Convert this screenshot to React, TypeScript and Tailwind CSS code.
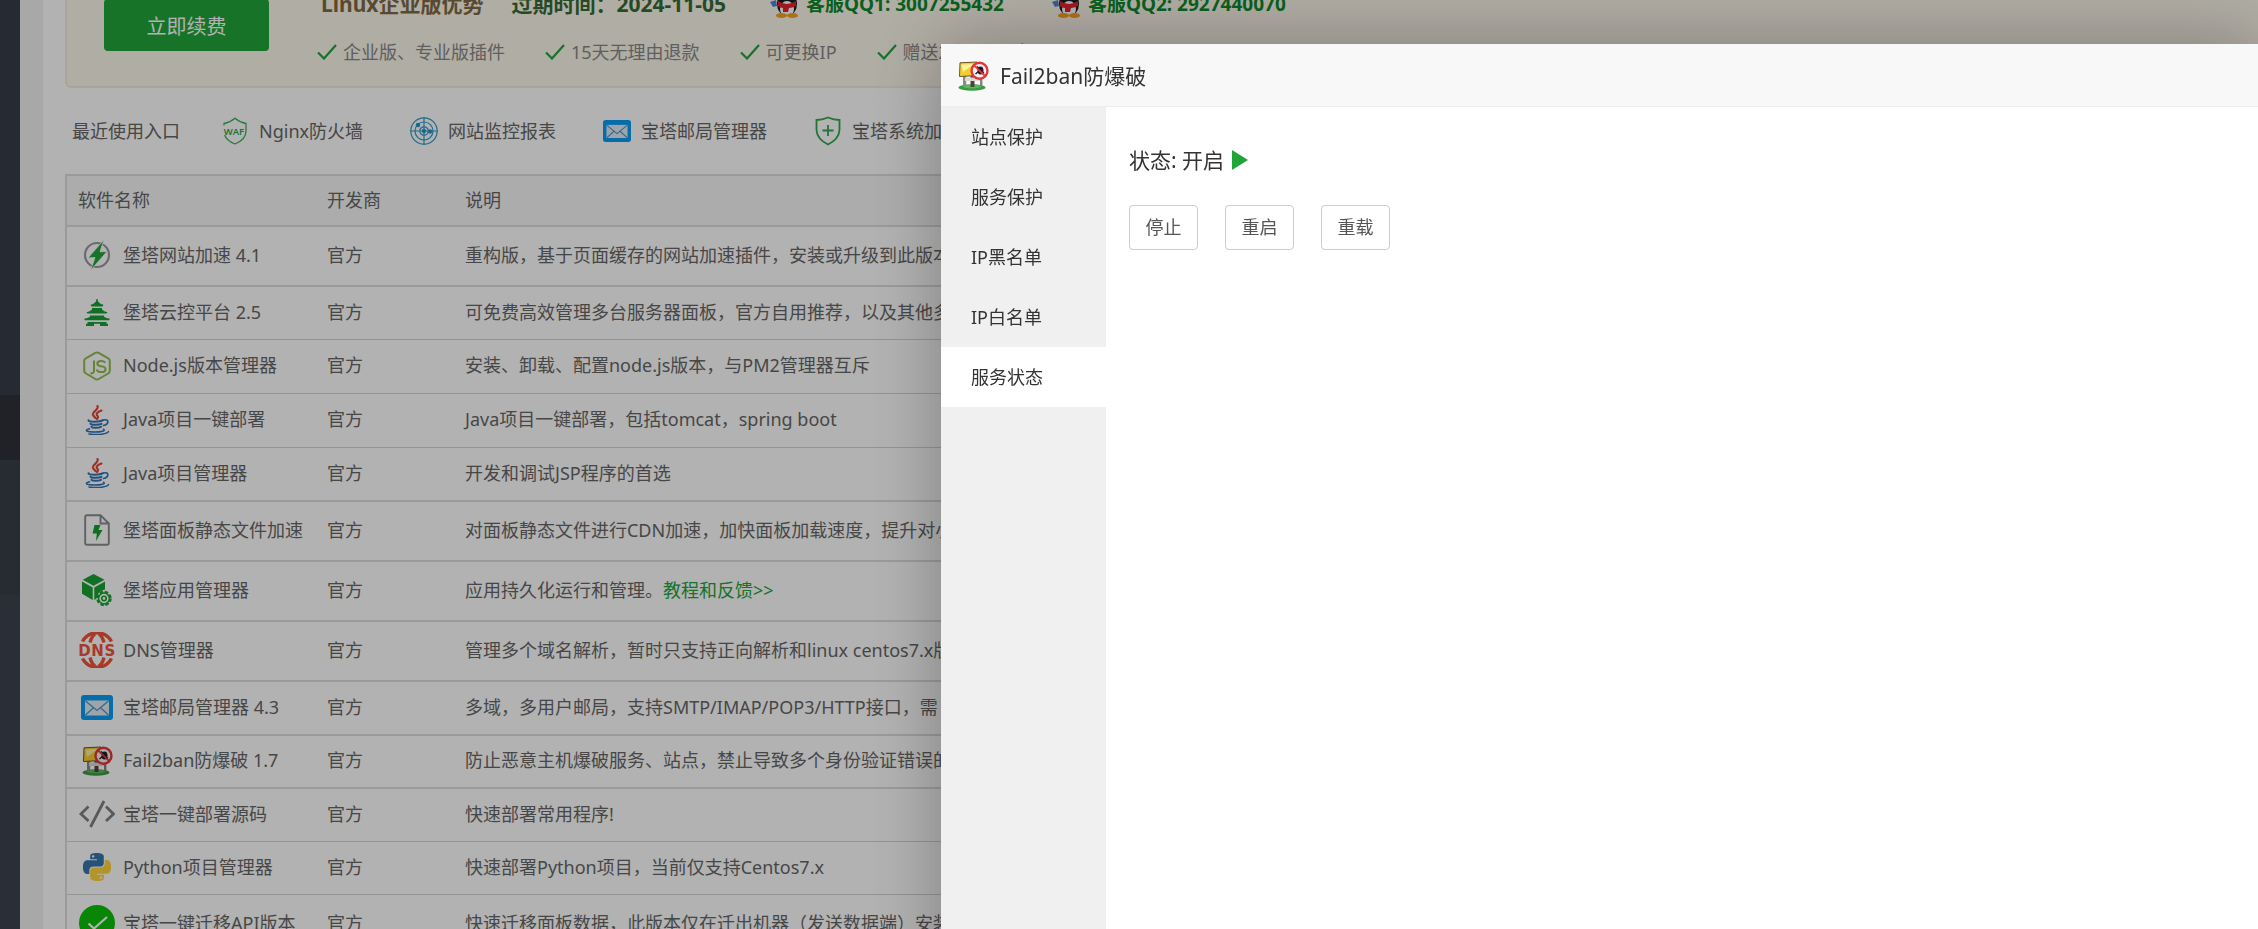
import type { ReactNode } from "react";

function CheckMark() {
  return (
    <svg viewBox="0 0 20 16" className="h-4 w-5 shrink-0" fill="none" stroke="#20a53a" strokeWidth="2.2">
      <path d="M1 8.5 L7 14.5 L19 1" />
    </svg>
  );
}

function Penguin() {
  return (
    <svg viewBox="0 0 28 28" className="h-7 w-7 shrink-0">
      <path d="M0 12 L6 10 L7 16 L3 17 Z" fill="#4d86d8" />
      <ellipse cx="17" cy="14" rx="10" ry="12" fill="#1c1c1c" />
      <ellipse cx="17" cy="19" rx="7" ry="8" fill="#fff" />
      <path d="M8 11 q9 6 18 0 l0 5 q-4 2 -7 2 l-1 4 h-5 v-4 q-3 0 -5 -2 Z" fill="#e8222c" />
      <ellipse cx="11.5" cy="25.5" rx="5.5" ry="2.5" fill="#f7a21b" />
      <ellipse cx="22.5" cy="25.5" rx="5.5" ry="2.5" fill="#f7a21b" />
    </svg>
  );
}

function WafIcon() {
  return (
    <svg viewBox="0 0 30 30" className="h-[30px] w-[30px]" fill="none" stroke="#3fae5a" strokeWidth="1.3">
      <path d="M4 9.5 V7.5 Q10 6.5 15 2.2 Q20 6.5 26 7.5 V15 Q26 23.5 15 28 Q6.5 24.5 4.600 19" />
      <text x="14" y="18.5" textAnchor="middle" fontSize="9.5" fontWeight="600" fill="#20a53a" stroke="none" fontFamily="Open Sans, sans-serif">
        WAF
      </text>
    </svg>
  );
}

function RadarIcon() {
  return (
    <svg viewBox="0 0 30 30" className="h-[30px] w-[30px]" fill="none" stroke="#2f9bcb" strokeWidth="1.2">
      <circle cx="15" cy="15" r="13.2" />
      <circle cx="15" cy="15" r="9" />
      <circle cx="15" cy="15" r="4.2" />
      <path d="M15 1 V29 M1 15 H29" />
      <circle cx="15" cy="15" r="1.6" fill="#1a8fc4" />
      <circle cx="9" cy="9" r="1.7" fill="#1a8fc4" />
      <circle cx="21" cy="15.5" r="1.7" fill="#1a8fc4" />
    </svg>
  );
}

function MailIcon({ className }: { className: string }) {
  return (
    <svg viewBox="0 0 32 25" className={className}>
      <rect width="32" height="25" rx="3" fill="#0a9df5" />
      <rect x="4" y="5.5" width="24" height="15" fill="#e6ebf0" />
      <path d="M4.500 6 L16 15.500 L27.500 6 M4.500 20 L12.500 12.800 M27.500 20 L19.500 12.800" fill="none" stroke="#3a97d6" strokeWidth="1.200" />
    </svg>
  );
}

function ShieldPlusIcon() {
  return (
    <svg viewBox="0 0 30 30" className="h-[30px] w-[30px]" fill="none" stroke="#2fa84c" strokeWidth="1.8">
      <path d="M15 1.5 Q9 4 3.5 4 V14 Q4 23 15 28.5 Q26 23 26.5 14 V4 Q21 4 15 1.5 Z" />
      <path d="M15 9 V20 M9.5 14.5 H20.5" />
    </svg>
  );
}

function BoltCircleIcon() {
  return (
    <svg viewBox="0 0 30 32" className="h-8 w-[30px]">
      <circle cx="15" cy="16" r="12" fill="none" stroke="#9b98a3" strokeWidth="2.200" />
      <path d="M22 0.5 L6 19 L13 18.500 L8.500 31.500 L25 12.500 L18 12.800 Z" fill="#20a53a" stroke="#fff" strokeWidth="0.8" />
    </svg>
  );
}

function PagodaIcon() {
  return (
    <svg viewBox="0 0 26 27" className="h-[27px] w-[26px]" fill="#18a034">
      <path d="M12.4 0 H13.6 L14 2.400 Q16 4.800 19.500 5.800 L18.500 7.400 H7.500 L6.500 5.800 Q10 4.800 12 2.400 Z" />
      <path d="M8 9 H18 V10.600 Q20 12.800 23.500 13.200 L22.500 14.600 H3.500 L2.500 13.200 Q6 12.800 8 10.600 Z" />
      <path d="M6 16.400 H20 V17.800 Q22 19.400 26 19.700 L25 21.300 H1 L0 19.700 Q4 19.400 6 17.800 Z" />
      <path d="M3.500 23 H22.500 V24.800 H24 V27 H16 V24.800 H10 V27 H2 V24.800 H3.500 Z" />
    </svg>
  );
}

function NodeIcon() {
  return (
    <svg viewBox="0 0 28 30" className="h-[30px] w-7">
      <path
        d="M8.500 25.600 L3 22.500 Q1.200 21.500 1.200 19.800 V10 Q1.200 8.300 2.800 7.400 L12.300 1.900 Q14 1 15.700 1.900 L25.200 7.400 Q26.800 8.300 26.800 10 V19.800 Q26.800 21.500 25.200 22.500 L15.700 28 Q14 29 12.300 28 L9.800 26.500"
        fill="none"
        stroke="#93bd4c"
        strokeWidth="2"
        strokeLinecap="round"
      />
      <path
        d="M11 9.500 V20 Q11 22.500 7.500 22.200 M22.300 11.800 Q21 9.900 18 9.900 Q14.300 9.900 14.300 12.500 Q14.300 14.900 18 15.200 Q22.500 15.500 22.500 18.200 Q22.500 21.100 18.200 21.100 Q14.500 21.100 13.800 18.400"
        fill="none"
        stroke="#93bd4c"
        strokeWidth="2"
      />
    </svg>
  );
}

function JavaIcon() {
  return (
    <svg viewBox="0 0 26 30" className="h-[30px] w-[26px]" fill="none" strokeLinecap="round">
      <path d="M13.500 1 C15.500 5 7.500 6.500 9 10 C9.500 11 10.500 12 11.500 13 M17.500 5.500 C13 7 11.500 9 13.500 10.800 C14.500 12 14 13 13 14" stroke="#e5433a" strokeWidth="2.100" />
      <path d="M4.500 15.300 C4 17.200 16 17.200 19 15.200 M6.500 18.600 C7 20.200 15.500 20.100 17.500 18.800 M7.500 21.800 C8.500 23.200 14.500 23.100 17 21.800" stroke="#2f74b8" strokeWidth="2" />
      <path d="M19.500 15 C25.500 13.500 25 19.500 19.500 20.500" stroke="#2f74b8" strokeWidth="1.700" />
      <path d="M5.500 23.800 C-1 25.500 3.500 27 10.500 27 C17.500 27 22 25.700 19.500 24.200 M5 28.900 C14 30.200 23.500 29.200 24.500 26.600" stroke="#2f74b8" strokeWidth="1.500" />
    </svg>
  );
}

function FileBoltIcon() {
  return (
    <svg viewBox="0 0 26 32" className="h-8 w-[26px]">
      <path d="M3 1.200 H16.500 L24.800 9.500 V29 Q24.800 30.800 23 30.800 H3 Q1.200 30.800 1.200 29 V3 Q1.200 1.200 3 1.200 Z M16.500 1.200 V9.500 H24.800" fill="none" stroke="#8b8b90" strokeWidth="1.900" />
      <path d="M10.500 11 H16.500 L14.500 16 H18.500 L12 27 L12.800 19.500 H8.500 Z" fill="#13a02f" />
    </svg>
  );
}

function CubeGearIcon() {
  return (
    <svg viewBox="0 0 30 33" className="h-[33px] w-[30px]">
      <path d="M11.500 0 L22.500 5.800 L11.500 11.800 L0.800 5.800 Z M0 7.500 L10.700 13.400 V26 L0 19.800 Z M12.300 13.400 L23 7.500 V15.500 Q15.500 17 14.500 24.500 L12.300 26 Z" fill="#17a232" />
      <circle cx="22" cy="24.500" r="6.500" fill="none" stroke="#17a232" strokeWidth="2.400" strokeDasharray="3.400 1.700" />
      <circle cx="22" cy="24.500" r="5.400" fill="none" stroke="#17a232" strokeWidth="1.500" />
      <circle cx="22" cy="24.500" r="2.200" fill="none" stroke="#17a232" strokeWidth="1.600" />
    </svg>
  );
}

function DnsIcon() {
  return (
    <svg viewBox="0 0 36 36" className="h-9 w-9">
      <path d="M3.500 9.500 A16.500 16.500 0 0 1 32.500 9.500 M3.500 26.500 A16.500 16.500 0 0 0 32.500 26.500" fill="none" stroke="#f0533a" strokeWidth="3.400" />
      <path d="M11 10.500 Q12.500 4.500 16 1.800 M25 10.500 Q23.500 4.500 20 1.800 M11 25.500 Q12.500 31.500 16 34.200 M25 25.500 Q23.500 31.500 20 34.200" fill="none" stroke="#f0533a" strokeWidth="3.400" />
      <g fontSize="15" fontWeight="700" fill="#f0533a" fontFamily="DejaVu Sans, sans-serif" textAnchor="middle">
        <text x="5.500" y="23.500">D</text>
        <text x="18.500" y="23.500">N</text>
        <text x="31" y="23.500">S</text>
      </g>
    </svg>
  );
}

function Fail2banIcon() {
  return (
    <svg viewBox="0 0 31 30" className="h-[30px] w-[31px]">
      <ellipse cx="14" cy="26.500" rx="13.500" ry="3.200" fill="#3b9b45" />
      <ellipse cx="14" cy="25.500" rx="9" ry="1.800" fill="#59b95b" />
      <rect x="5" y="13" width="3.200" height="12" fill="#8d8a86" />
      <rect x="12.500" y="15" width="4" height="11" fill="#4f413b" />
      <rect x="22" y="17" width="2.400" height="8.500" fill="#88827c" />
      <path d="M7 16.500 H22 V20 H7 Z" fill="#dcd8d2" />
      <path d="M2 1.800 L19 1 V14.500 L1.500 15.500 Z" fill="#f3cf2e" stroke="#6a5431" strokeWidth="1" />
      <path d="M3.500 3.500 L16 3 L5 11 Z" fill="#fdf0a0" />
      <circle cx="21.500" cy="9.700" r="8" fill="#f3f1f1" stroke="#e5353a" strokeWidth="2.400" />
      <ellipse cx="22.500" cy="9.500" rx="3" ry="4" fill="#1d1c26" />
      <path d="M17.500 13 L21 10 M19 5.500 L26 12.500" stroke="#1d1c26" strokeWidth="1.400" />
      <path d="M15.800 4.200 L27.200 15.200" stroke="#e5353a" strokeWidth="1.800" />
    </svg>
  );
}

function CodeIcon() {
  return (
    <svg viewBox="0 0 36 28" className="h-7 w-9" fill="none" stroke="#808080" strokeWidth="2.800">
      <path d="M9.500 6.500 L2 14 L9.500 21 M27 6.500 L34.500 14 L27 21 M25 1 L11.500 27" />
    </svg>
  );
}

function PythonIcon() {
  return (
    <svg viewBox="0 0 24 24" className="h-7 w-7">
      <path
        fill="#3776ab"
        d="M14.25.18l.9.2.73.26.59.3.45.32.34.34.25.34.16.33.1.3.04.26.02.2-.01.13V8.5l-.05.63-.13.55-.21.46-.26.38-.3.31-.33.25-.35.19-.35.14-.33.1-.3.07-.26.04-.21.02H8.77l-.69.05-.59.14-.5.22-.41.27-.33.32-.27.35-.2.36-.15.37-.1.35-.07.32-.04.27-.02.21v3.06H3.17l-.21-.03-.28-.07-.32-.12-.35-.18-.36-.26-.36-.36-.35-.46-.32-.59-.28-.73-.21-.88-.14-1.05-.05-1.23.06-1.22.16-1.04.24-.87.32-.71.36-.57.4-.44.42-.33.42-.24.4-.16.36-.1.32-.05.24-.01h.16l.06.01h8.16v-.83H6.18l-.01-2.75-.02-.37.05-.34.11-.31.17-.28.25-.26.31-.23.38-.2.44-.18.51-.15.58-.12.64-.1.71-.06.77-.04.84-.02 1.27.05zm-6.3 1.98l-.23.33-.08.41.08.41.23.34.33.22.41.09.41-.09.33-.22.23-.34.08-.41-.08-.41-.23-.33-.33-.22-.41-.09-.41.09z"
      />
      <path
        fill="#ffd43b"
        d="M21.040 6.110l.28.06.32.12.35.18.36.27.36.35.35.47.32.59.28.73.21.88.14 1.04.05 1.23-.06 1.23-.16 1.04-.24.86-.32.71-.36.57-.4.45-.42.33-.42.24-.4.16-.36.09-.32.05-.24.02-.16-.01h-8.220v.82h5.840l.01 2.760.02.36-.05.34-.11.31-.17.29-.25.25-.31.24-.38.2-.44.17-.51.15-.58.13-.64.09-.71.07-.77.04-.84.01-1.270-.04-1.070-.14-.9-.2-.73-.25-.59-.3-.45-.33-.34-.34-.25-.34-.16-.33-.1-.3-.04-.25-.02-.2.01-.13v-5.340l.05-.64.13-.54.21-.46.26-.38.3-.32.33-.24.35-.2.35-.14.33-.1.3-.06.26-.04.21-.02.13-.01h5.840l.69-.05.59-.14.5-.21.41-.28.33-.32.27-.35.2-.36.15-.36.1-.35.07-.32.04-.28.02-.21V6.070h2.090l.14.01zm-6.470 14.250l-.23.33-.08.41.08.41.23.33.33.23.41.08.41-.08.33-.23.23-.33.08-.41-.08-.41-.23-.33-.33-.23-.41-.08-.41.08z"
      />
    </svg>
  );
}

function DoneIcon() {
  return (
    <svg viewBox="0 0 36 36" className="h-9 w-9">
      <circle cx="18" cy="18" r="18" fill="#0cc00a" />
      <path d="M9.500 18.500 L15 23.500 L28 12" fill="none" stroke="#fff" strokeWidth="2.200" />
    </svg>
  );
}

type Row = {
  icon: ReactNode;
  name: string;
  desc: string;
  link?: string;
  height: string;
  line: string;
};

const thin = "border-b border-[#d4d4d4]";
const thick = "border-b-2 border-[#ddd]";

const rows: Row[] = [
  { icon: <BoltCircleIcon />, name: "堡塔网站加速 4.1", desc: "重构版，基于页面缓存的网站加速插件，安装或升级到此版本", height: "h-[60px]", line: thick },
  { icon: <PagodaIcon />, name: "堡塔云控平台 2.5", desc: "可免费高效管理多台服务器面板，官方自用推荐，以及其他多", height: "h-[53px]", line: thin },
  { icon: <NodeIcon />, name: "Node.js版本管理器", desc: "安装、卸载、配置node.js版本，与PM2管理器互斥", height: "h-[54px]", line: thin },
  { icon: <JavaIcon />, name: "Java项目一键部署", desc: "Java项目一键部署，包括tomcat，spring boot", height: "h-[54px]", line: thin },
  { icon: <JavaIcon />, name: "Java项目管理器", desc: "开发和调试JSP程序的首选", height: "h-[54px]", line: thick },
  { icon: <FileBoltIcon />, name: "堡塔面板静态文件加速", desc: "对面板静态文件进行CDN加速，加快面板加载速度，提升对小", height: "h-[60px]", line: thick },
  { icon: <CubeGearIcon />, name: "堡塔应用管理器", desc: "应用持久化运行和管理。", link: "教程和反馈>>", height: "h-[60px]", line: thick },
  { icon: <DnsIcon />, name: "DNS管理器", desc: "管理多个域名解析，暂时只支持正向解析和linux centos7.x版", height: "h-[60px]", line: thick },
  { icon: <MailIcon className="h-[25px] w-8" />, name: "宝塔邮局管理器 4.3", desc: "多域，多用户邮局，支持SMTP/IMAP/POP3/HTTP接口，需", height: "h-[54px]", line: thick },
  { icon: <Fail2banIcon />, name: "Fail2ban防爆破 1.7", desc: "防止恶意主机爆破服务、站点，禁止导致多个身份验证错误的", height: "h-[53px]", line: thick },
  { icon: <CodeIcon />, name: "宝塔一键部署源码", desc: "快速部署常用程序!", height: "h-[53px]", line: thin },
  { icon: <PythonIcon />, name: "Python项目管理器", desc: "快速部署Python项目，当前仅支持Centos7.x", height: "h-[53px]", line: thin },
  { icon: <DoneIcon />, name: "宝塔一键迁移API版本", desc: "快速迁移面板数据，此版本仅在迁出机器（发送数据端）安装", height: "h-[60px]", line: thick },
];

const perks = ["企业版、专业版插件", "15天无理由退款", "可更换IP", "赠送2张SSL证书"];

const recent = [
  { icon: <WafIcon />, label: "Nginx防火墙" },
  { icon: <RadarIcon />, label: "网站监控报表" },
  { icon: <MailIcon className="h-[22px] w-7" />, label: "宝塔邮局管理器" },
  { icon: <ShieldPlusIcon />, label: "宝塔系统加固" },
];

const tabs = ["站点保护", "服务保护", "IP黑名单", "IP白名单", "服务状态"];

function SideRail() {
  return (
    <nav className="flex w-5 shrink-0 flex-col bg-[#3d444f]">
      <div className="h-[395px] bg-[#373e49]" />
      <div className="h-[65px] bg-[#2e3138]" />
      <div className="h-[135px] bg-[#394049]" />
    </nav>
  );
}

function Banner() {
  return (
    <section className="-mt-10 flex h-32 gap-12 rounded-l-md border-2 border-r-0 border-[#f3ebdc] bg-[#fdf8ec] pl-[37px] whitespace-nowrap">
      <button className="mt-[37px] h-[52px] w-[165px] shrink-0 rounded bg-[#20a53a] pt-1 text-[20px] leading-6 text-white">立即续费</button>
      <div className="flex flex-col gap-[18px] pt-[27px]">
        <div className="flex h-[30px] items-center pl-1 text-[19px] font-bold text-[#0d8a2b]">
          <span className="mr-7 text-[21px] text-[#7d6b45]">Linux企业版优势</span>
          <span className="mr-11 text-[21px] text-[#376b35]">过期时间：2024-11-05</span>
          <a href="#qq1" className="mr-12 flex items-center gap-2">
            <Penguin />
            客服QQ1: 3007255432
          </a>
          <a href="#qq2" className="flex items-center gap-2">
            <Penguin />
            客服QQ2: 2927440070
          </a>
        </div>
        <ul className="flex h-[30px] items-center gap-10 text-[18px] text-[#888]">
          {perks.map((perk) => (
            <li key={perk} className="flex items-center gap-1.5">
              <CheckMark />
              {perk}
            </li>
          ))}
        </ul>
      </div>
    </section>
  );
}

function SoftwareTable() {
  return (
    <table className="w-full table-fixed border-separate border-spacing-0 border-2 border-r-0 border-b-0 border-[#ddd] text-left">
      <thead>
        <tr className="h-[51px] bg-[#f6f6f6]">
          <th className="w-[249px] border-b-2 border-[#ddd] px-[11px] font-normal">软件名称</th>
          <th className="w-[137px] border-b-2 border-[#ddd] px-[11px] font-normal">开发商</th>
          <th className="border-b-2 border-[#ddd] px-3 font-normal">说明</th>
        </tr>
      </thead>
      <tbody>
        {rows.map((row) => (
          <tr key={row.name} className={row.height}>
            <td className={`pb-0.5 pl-[11px] ${row.line}`}>
              <div className="flex items-center gap-[7px]">
                <span className="flex w-[38px] shrink-0 justify-center">{row.icon}</span>
                {row.name}
              </div>
            </td>
            <td className={`px-[11px] pb-0.5 ${row.line}`}>官方</td>
            <td className={`px-3 pb-0.5 ${row.line}`}>
              {row.desc}
              {row.link && (
                <a href="#guide" className="text-[#20a53a]">
                  {row.link}
                </a>
              )}
            </td>
          </tr>
        ))}
      </tbody>
    </table>
  );
}

function PluginDialog() {
  return (
    <div
      role="dialog"
      aria-label="Fail2ban防爆破"
      className="fixed top-11 right-0 -bottom-24 left-[941px] flex flex-col rounded-sm bg-white text-[#333] shadow-[1px_1px_75px_rgba(0,0,0,0.3)]"
    >
      <header className="flex h-[63px] shrink-0 items-center gap-[11px] border-b border-[#eee] bg-[#f8f8f8] pt-0.5 pl-[17px]">
        <Fail2banIcon />
        <h2 className="text-[21px] leading-[30px]">Fail2ban防爆破</h2>
      </header>
      <div className="flex grow">
        <nav className="w-[165px] shrink-0 bg-[#f0f0f0]">
          {tabs.map((tab) => (
            <button
              key={tab}
              aria-current={tab === "服务状态"}
              className="block h-[60px] w-full pl-[30px] text-left aria-[current=true]:bg-white"
            >
              {tab}
            </button>
          ))}
        </nav>
        <main className="grow px-[23px] pt-[38px]">
          <p className="flex items-center gap-2 text-[21px] leading-[30px]">
            状态: 开启
            <svg viewBox="0 0 16 20" className="h-5 w-4" fill="#20a53a">
              <path d="M0 0 L16 10 L0 20 Z" />
            </svg>
          </p>
          <div className="mt-[30px] flex gap-[27px]">
            {["停止", "重启", "重载"].map((label) => (
              <button key={label} className="h-[45px] w-[69px] rounded border border-[#ccc] bg-white text-[#555]">
                {label}
              </button>
            ))}
          </div>
        </main>
      </div>
    </div>
  );
}

export default function App() {
  return (
    <div className="flex h-screen overflow-hidden bg-[#f1f1f1] font-['Noto_Sans','Noto_Sans_CJK_SC',sans-serif] text-[18px] leading-[27px] text-[#666]">
      <SideRail />
      <div className="ml-[23px] min-w-0 grow bg-white pl-[22px] whitespace-nowrap">
        <Banner />
        <div className="flex h-[86px] items-center gap-[46px] pl-[7px]">
          <span className="-mr-1.5">最近使用入口</span>
          {recent.map((entry) => (
            <a key={entry.label} href="#plugin" className="flex items-center gap-[9px]">
              <span className="flex w-[30px] justify-center">{entry.icon}</span>
              {entry.label}
            </a>
          ))}
        </div>
        <SoftwareTable />
      </div>
      <div className="fixed inset-0 bg-black/30" />
      <PluginDialog />
    </div>
  );
}
